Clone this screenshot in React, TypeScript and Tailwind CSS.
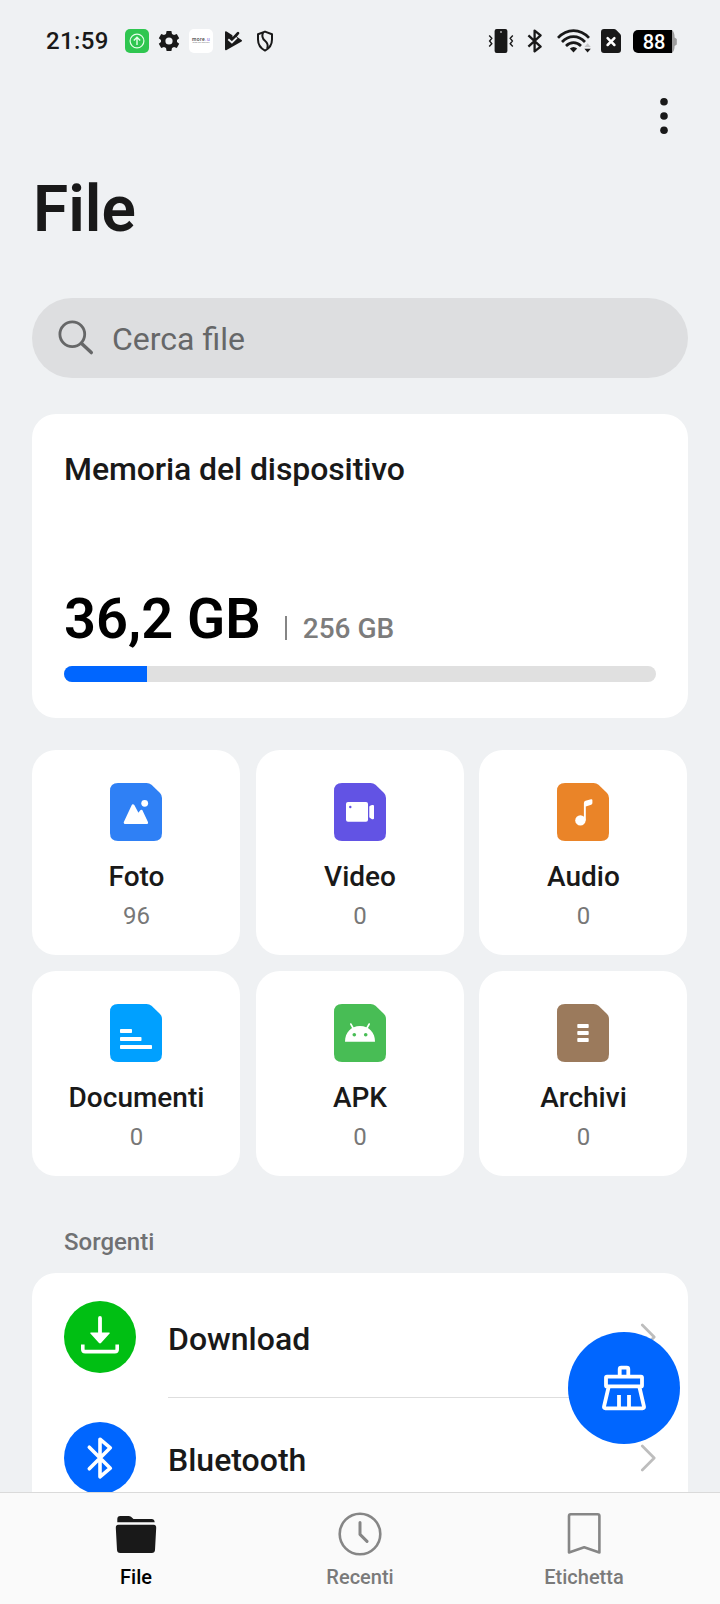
import React from 'react';

interface Category {
  label: string;
  count: number;
  color: string;
  glyph: React.ReactNode;
}

interface Source {
  label: string;
  icon: React.ReactNode;
}

const categories: Category[] = [
  {
    label: 'Foto',
    count: 96,
    color: '#2f80f5',
    glyph: (
      <>
        <circle cx="34.7" cy="20.3" r="3.4" />
        <path
          d="M15.2 39.6 L23 22.8 L28.2 32.4 L31.3 28.3 L36.6 39.6 Z"
          stroke="#fff"
          strokeWidth="3"
          strokeLinejoin="round"
        />
      </>
    ),
  },
  {
    label: 'Video',
    count: 0,
    color: '#6253e4',
    glyph: (
      <>
        <rect x="12" y="19" width="22" height="19.7" rx="2" />
        <path d="M35.3 24 q0-.8 .8-1.2 L38 22 H39 q1 0 1 1 V35.3 q0 1-1 1 H38 L36.1 35 q-.8-.4-.8-1.2 Z" />
        <circle cx="16.3" cy="24" r="1.2" fill="#6253e4" />
      </>
    ),
  },
  {
    label: 'Audio',
    count: 0,
    color: '#ea8428',
    glyph: (
      <>
        <circle cx="23.4" cy="37.4" r="5.2" />
        <path d="M26.9 20 q0-1.8 1.6-2.3 L34 16.2 q1.4-.3 1.4 1 V20 q0 1.3-1.2 1.8 L28.8 23.6 V37.6 H26.9 Z" />
      </>
    ),
  },
  {
    label: 'Documenti',
    count: 0,
    color: '#00a0ff',
    glyph: (
      <>
        <rect x="10" y="25" width="12" height="4" rx=".8" />
        <rect x="10" y="33" width="21.5" height="4" rx=".8" />
        <rect x="10" y="41" width="32" height="4" rx=".8" />
      </>
    ),
  },
  {
    label: 'APK',
    count: 0,
    color: '#48bd55',
    glyph: (
      <>
        <path d="M11 37.7 C11 28.5 17 22 26 22 S41 28.5 41 37.7 Z" />
        <path d="M16.8 20 L19.6 25 M35.2 20 L32.4 25" stroke="#fff" strokeWidth="1.6" strokeLinecap="round" />
        <circle cx="20.3" cy="30.7" r="1.8" fill="#48bd55" />
        <circle cx="31.7" cy="30.7" r="1.8" fill="#48bd55" />
      </>
    ),
  },
  {
    label: 'Archivi',
    count: 0,
    color: '#9b7a5c',
    glyph: (
      <>
        <rect x="20.3" y="20" width="11.4" height="4" rx=".8" />
        <rect x="20.3" y="27" width="11.4" height="4" rx=".8" />
        <rect x="20.3" y="34" width="11.4" height="4" rx=".8" />
      </>
    ),
  },
];

const sources: Source[] = [
  {
    label: 'Download',
    icon: (
      <svg viewBox="0 0 72 72" className="size-[72px]">
        <circle cx="36" cy="36" r="36" fill="#00bf13" />
        <path d="M36 17 V34" stroke="#fff" strokeWidth="3.8" strokeLinecap="round" />
        <path d="M26.8 31.4 H45.2 q1.2 .2 .4 1.2 L37 42 q-1 .9-2 0 L26.4 32.6 q-.8-1 .4-1.2 Z" fill="#fff" />
        <path d="M18.8 43.5 V48.2 q0 2.4 2.4 2.4 H50.8 q2.4 0 2.4-2.4 V43.5" fill="none" stroke="#fff" strokeWidth="3.6" />
      </svg>
    ),
  },
  {
    label: 'Bluetooth',
    icon: (
      <svg viewBox="0 0 72 72" className="size-[72px]">
        <circle cx="36" cy="36" r="36" fill="#0066ff" />
        <path
          d="M25.3 25.2 L46.3 46.2 L36 54.8 V17.2 L46.3 25.8 L25.3 46.8"
          fill="none"
          stroke="#fff"
          strokeWidth="3.6"
          strokeLinecap="round"
          strokeLinejoin="round"
        />
      </svg>
    ),
  },
];

/** Clock, notification icons and system indicators */
const StatusBar: React.FC = () => (
  <div className="flex h-[82px] shrink-0 items-center pl-[46px] pr-[43px] text-[#191919]">
    <span className="w-[79px] text-2xl font-medium tracking-[0.4px]">21:59</span>
    <svg viewBox="0 0 24 24" className="size-6">
      <rect width="24" height="24" rx="5" fill="#2fc650" />
      <g fill="none" stroke="#e4ffe9" strokeWidth="1.2">
        <circle cx="12" cy="12" r="6.9" />
        <path d="M12 16 V8.6 M8.8 11.4 L12 8.3 L15.2 11.4" strokeWidth="1.4" />
      </g>
    </svg>
    <svg viewBox="0 0 24 24" className="ml-2 size-6" fill="currentColor">
      <path
        fillRule="evenodd"
        d="M9.6 2 H14.4 L15 5 L17 6.1 L19.8 5.1 L22.2 9.2 L20 11.1 V12.9 L22.2 14.8 L19.8 18.9 L17 17.9 L15 19 L14.4 22 H9.6 L9 19 L7 17.9 L4.2 18.9 L1.8 14.8 L4 12.9 V11.1 L1.8 9.2 L4.2 5.1 L7 6.1 L9 5 Z M12 8.4 a3.6 3.6 0 1 0 0 7.2 a3.6 3.6 0 1 0 0-7.2 Z"
      />
    </svg>
    <div className="ml-2 flex size-6 flex-col items-center justify-center rounded-[5px] bg-white leading-none">
      <span className="text-[5px] font-medium leading-[4px] tracking-[0.4px] text-[#444]">
        more<span className="text-[#9a86e0]">.u</span>
      </span>
      <span className="text-[2.5px] leading-[4px] text-[#777]">area de movies</span>
    </div>
    <svg viewBox="0 0 24 24" className="ml-2 size-6" fill="currentColor">
      <path d="M4 3.6 q0-1.8 1.6-1 L11.4 6.2 L11.6 8 L16 3.2 q1-1 2 0 q.8 .9 0 1.8 L15.8 7.8 L20.6 10.9 q1 .8 0 1.6 L5.6 21 q-1.6 .7-1.6-1 Z" />
      <path d="M7.3 10.2 L10.9 13.4 L15.9 8.6" fill="none" stroke="#eff1f3" strokeWidth="1.9" />
    </svg>
    <svg viewBox="0 0 24 24" className="ml-2 size-6" fill="none" stroke="currentColor" strokeWidth="2" strokeLinejoin="round">
      <path d="M12 2.6 L19 5.2 V10.5 C19 16 16 19.5 12 21.6 C8 19.5 5 16 5 10.5 V5.2 Z" />
      <path d="M10 3.6 C8.6 7 9.4 9.6 12 11.8 C14.6 14 15.4 16.4 14.2 19.6" />
    </svg>

    <div className="ml-auto flex items-center">
      <svg viewBox="0 0 26 24" className="h-6 w-[26px]" fill="none" stroke="currentColor" strokeWidth="1.4">
        <rect x="6.6" y="0" width="12.8" height="24" rx="2" fill="currentColor" stroke="none" />
        <circle cx="13" cy="3" r=".9" fill="#bbb" stroke="none" />
        <path d="M1.2 6.4 L3.8 9.2 L1.6 12 L3.8 14.8 L1.2 17.6 M24.8 6.4 L22.2 9.2 L24.4 12 L22.2 14.8 L24.8 17.6" />
      </svg>
      <svg viewBox="0 0 16 24" className="ml-[13px] h-6 w-4" fill="none" stroke="currentColor" strokeWidth="2.3" strokeLinejoin="round">
        <path d="M1.4 6.4 L13.6 17.6 L7.6 22.4 V1.6 L13.6 6.4 L1.4 17.6" />
      </svg>
      <svg viewBox="0 0 34 24" className="ml-[14px] h-6 w-[34px]" fill="none" stroke="currentColor" strokeWidth="2.7">
        <path d="M1 8.8 C10 -.9 23 -.9 32 8.8" />
        <path d="M5 13 C11.8 5.7 21.2 5.7 28 13" />
        <path d="M9 17 C13.5 12.6 19.5 12.6 24 17" />
        <path d="M12.8 19.6 q3.7-3.4 7.4 0 L16.5 23.6 Z" fill="currentColor" stroke="none" />
        <path d="M27.4 18 L30.6 14.2 L33.8 18 Z" fill="#c4c5c7" stroke="none" />
        <path d="M27.4 19.8 L30.6 23.6 L33.8 19.8 Z" fill="currentColor" stroke="none" />
      </svg>
      <svg viewBox="0 0 20 24" className="ml-[10px] h-6 w-5">
        <path d="M3 0 H13 q1.2 0 2 .8 L19.2 5 q.8 .8 .8 2 V21 q0 3-3 3 H3 q-3 0-3-3 V3 q0-3 3-3 Z" fill="currentColor" />
        <path d="M6.6 9.2 L13.4 16 M13.4 9.2 L6.6 16" stroke="#fff" strokeWidth="2.5" strokeLinecap="round" />
      </svg>
      <div className="ml-3 flex items-center">
        <div className="flex h-[23px] w-[39px] items-center justify-center rounded-l-[5px] bg-black pl-[3px] pt-px text-xl font-medium leading-none text-white">
          88
        </div>
        <svg viewBox="0 0 5 23" className="h-[23px] w-[5px]" fill="#9d9d9d">
          <path d="M0 0 Q2.6 2 2.6 7.5 L4.8 9 V14.5 L2.6 16 Q2.6 21 0 23 Z" />
        </svg>
      </div>
    </div>
  </div>
);

const SearchBar: React.FC = () => (
  <div className="flex h-20 items-center rounded-full bg-[#dddee0] pl-[26px] text-[#666768]">
    <svg viewBox="0 0 38 38" className="size-[38px]" fill="none" stroke="currentColor">
      <circle cx="14.3" cy="15.3" r="12.4" strokeWidth="2.8" />
      <path d="M23.6 24.4 L33.3 33.6" strokeWidth="3.4" strokeLinecap="round" />
    </svg>
    <span className="ml-4 pt-[2px] text-[32px] leading-10">Cerca file</span>
  </div>
);

const StorageCard: React.FC = () => (
  <div className="mt-9 h-[304px] rounded-3xl bg-white px-8 pt-[31px]">
    <h2 className="text-[32px] font-medium leading-[48px] tracking-[-0.1px] text-[#191919]">Memoria del dispositivo</h2>
    <div className="mt-[94px] flex h-16 items-baseline leading-[64px]">
      <span className="text-[56px] font-semibold text-black">36,2 GB</span>
      <span className="ml-6 h-6 w-[2px] translate-y-[9px] self-center bg-[#858585]" />
      <span className="ml-4 text-[28px] font-medium text-[#7c7c7c]">256 GB</span>
    </div>
    <div className="mt-[15px] h-4 overflow-hidden rounded-full bg-[#e0e0e0]">
      <div className="h-full w-[14%] bg-[#0066ff]" />
    </div>
  </div>
);

const CategoryTile: React.FC<{ category: Category }> = ({ category }) => (
  <div className="flex h-[205px] flex-col items-center rounded-3xl bg-white pt-[33px]">
    <svg viewBox="0 0 52 58" className="h-[58px] w-[52px]" fill="#fff">
      <path
        d="M8 0 H36.5 q3 0 5 1.8 L50 10 q2 2 2 5 V50 q0 8-8 8 H8 q-8 0-8-8 V8 q0-8 8-8 Z"
        fill={category.color}
      />
      {category.glyph}
    </svg>
    <span className="mt-[18px] pl-px text-[28px] font-medium leading-9 text-[#191919]">{category.label}</span>
    <span className="mt-[5px] pl-px text-2xl leading-8 text-[#777]">{category.count}</span>
  </div>
);

const SourceRow: React.FC<{ source: Source }> = ({ source }) => (
  <div className="flex h-[121px] pl-8">
    <div className="flex items-center pb-px">{source.icon}</div>
    <div className="ml-8 mr-8 flex flex-1 items-center justify-between border-b border-[#dedede]">
      <span className="pt-1 text-[32px] font-medium leading-10 text-[#191919]">{source.label}</span>
      <svg viewBox="0 0 16 28" className="h-7 w-4" fill="none" stroke="#bdbdbd" strokeWidth="2.7" strokeLinecap="round" strokeLinejoin="round">
        <path d="M2.3 2 L14.2 14 L2.3 26" />
      </svg>
    </div>
  </div>
);

const CleanButton: React.FC = () => (
  <button className="absolute left-[568px] top-[1332px] size-28 rounded-full bg-[#0066ff]">
    <svg viewBox="0 0 112 112" className="size-28" fill="none" stroke="#fff" strokeWidth="3.8" strokeLinejoin="round">
      <path d="M51.7 44 V37.2 q0-1.5 1.5-1.5 H58.8 q1.5 0 1.5 1.5 V44" />
      <rect x="38" y="44.6" width="36" height="9.8" rx="1" />
      <path d="M40.6 55 L36 74.6 q-.3 1.7 1.4 1.7 H74.6 q1.7 0 1.4-1.7 L71.4 55" />
      <path d="M51 63 V76 M61 63 V76" />
    </svg>
  </button>
);

interface NavItemProps {
  label: string;
  active?: boolean;
  children: React.ReactNode;
}

const NavItem: React.FC<NavItemProps> = ({ label, active, children }) => (
  <div className={`flex flex-1 flex-col items-center ${active ? 'text-black' : 'text-[#7a7a7a]'}`}>
    <svg viewBox="0 0 48 48" className="size-12" fill="none" stroke="#868686" strokeWidth="2.6" strokeLinejoin="round">
      {children}
    </svg>
    <span className="mt-[7px] text-xl font-medium leading-6">{label}</span>
  </div>
);

const BottomNav: React.FC = () => (
  <nav className="flex h-28 shrink-0 border-t border-[#dadada] bg-[#fafafa] px-6 pt-[17px]">
    <NavItem label="File" active>
      <g fill="#191919" stroke="none">
        <path d="M5.3 12.3 V9 q0-3 3-3 H16.5 q1.5 0 2.5 .8 L21.5 9 H39.7 q2.6 0 3 3.3 Z" />
        <path d="M6.5 14.7 H41.5 q2.8 0 2.7 3 L43 40 q-.2 3-3.2 3 H8.2 q-3 0-3.2-3 L3.8 17.7 q-.1-3 2.7-3 Z" />
      </g>
    </NavItem>
    <NavItem label="Recenti">
      <circle cx="24" cy="24" r="20.3" />
      <path d="M24 12.4 V24.4 L31 31.4" strokeWidth="3" strokeLinecap="round" />
    </NavItem>
    <NavItem label="Etichetta">
      <path d="M9 42.4 V6 q0-1.7 1.7-1.7 H37.7 q1.7 0 1.7 1.7 V42.4 L24.2 37.3 Z" />
    </NavItem>
  </nav>
);

export default function App() {
  return (
    <div className="relative flex h-[1604px] w-[720px] flex-col overflow-hidden bg-[#eff1f3] font-['Roboto',sans-serif]">
      <StatusBar />
      <main className="flex-1 overflow-hidden px-8">
        <div className="flex justify-end pr-[20px] pt-[15px]">
          <svg viewBox="0 0 8 38" className="h-[38px] w-2" fill="#191919">
            <circle cx="4" cy="4.7" r="3.8" />
            <circle cx="4" cy="19" r="3.8" />
            <circle cx="4" cy="33.3" r="3.8" />
          </svg>
        </div>
        <h1 className="mb-[56px] ml-px mt-[43px] text-[64px] font-semibold leading-[64px] text-[#191919]">File</h1>
        <SearchBar />
        <StorageCard />
        <div className="mt-8 grid w-[655px] grid-cols-3 gap-x-[15.5px] gap-y-4">
          {categories.map((category) => (
            <CategoryTile key={category.label} category={category} />
          ))}
        </div>
        <h3 className="ml-8 mt-[50px] text-2xl font-medium leading-8 text-[#707173]">Sorgenti</h3>
        <div className="mt-[15px] rounded-3xl bg-white pt-1">
          {sources.map((source) => (
            <SourceRow key={source.label} source={source} />
          ))}
        </div>
      </main>
      <BottomNav />
      <CleanButton />
    </div>
  );
}
